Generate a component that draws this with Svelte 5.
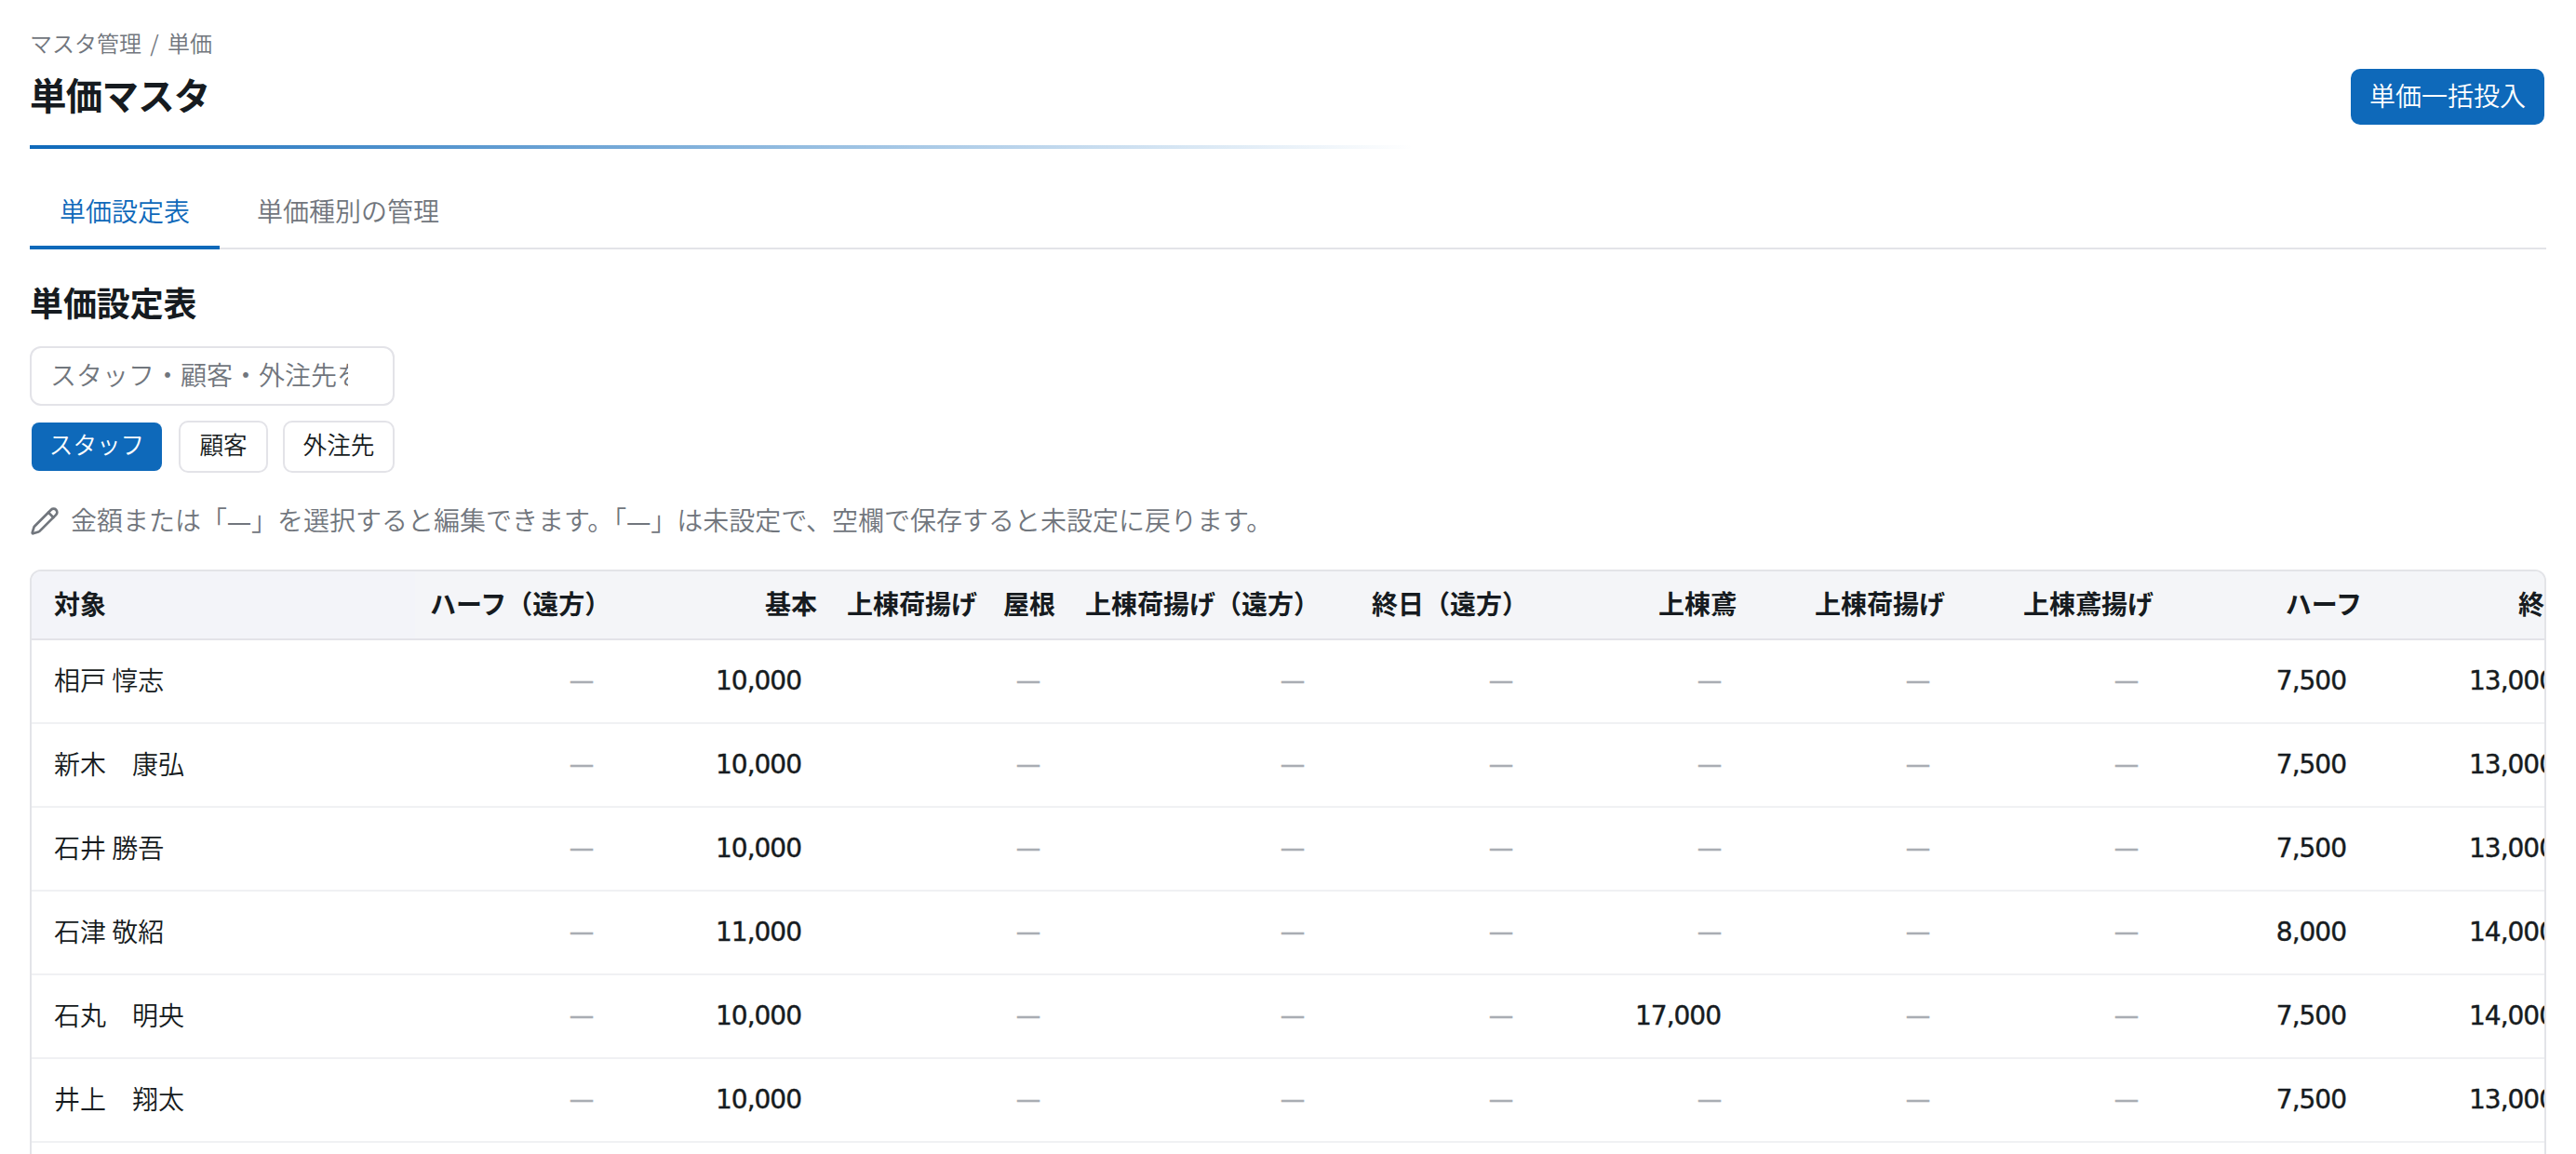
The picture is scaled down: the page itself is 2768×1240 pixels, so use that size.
<script>
  const columns = [
    'ハーフ（遠方）', '基本', '上棟荷揚げ　屋根', '上棟荷揚げ（遠方）', '終日（遠方）',
    '上棟鳶', '上棟荷揚げ', '上棟鳶揚げ', 'ハーフ', '終日',
  ];
  const row = (name, base, half, full, tobi = null) => ({
    name,
    prices: [null, base, null, null, null, tobi, null, null, half, full],
  });
  const rows = [
    row('相戸 惇志', 10000, 7500, 13000),
    row('新木　康弘', 10000, 7500, 13000),
    row('石井 勝吾', 10000, 7500, 13000),
    row('石津 敬紹', 11000, 8000, 14000),
    row('石丸　明央', 10000, 7500, 14000, 17000),
    row('井上　翔太', 10000, 7500, 13000),
  ];
  const format = (n) => String(n).replace(/\B(?=(\d{3})+$)/g, ',');
</script>

<main>
  <header>
    <div>
      <nav class="crumbs">マスタ管理 / 単価</nav>
      <h1>単価マスタ</h1>
    </div>
    <button class="primary bulk">単価一括投入</button>
  </header>
  <div class="rule"></div>

  <div class="tabs">
    <button class="tab active">単価設定表</button>
    <button class="tab">単価種別の管理</button>
  </div>

  <h2>単価設定表</h2>
  <div class="search"><input placeholder="スタッフ・顧客・外注先を検索" /></div>
  <div class="filters">
    <button class="chip primary">スタッフ</button>
    <button class="chip">顧客</button>
    <button class="chip">外注先</button>
  </div>

  <p class="hint">
    <svg viewBox="0 0 24 24" fill="none" stroke="currentColor" stroke-width="2" stroke-linecap="round" stroke-linejoin="round">
      <path d="M21.174 6.812a1 1 0 0 0-3.986-3.987L3.842 16.174a2 2 0 0 0-.5.83l-1.321 4.352a.5.5 0 0 0 .623.622l4.353-1.32a2 2 0 0 0 .83-.497z" />
      <path d="m15 5 4 4" />
    </svg>
    <span>金額または「<i>—</i>」を選択すると編集できます。「<i>—</i>」は未設定で、空欄で保存すると未設定に戻ります。</span>
  </p>

  <div class="table-wrap">
    <table>
      <colgroup>
        <col class="name-col" />
        {#each columns as _, i}
          <col class:w256={i === 2} class:w284={i === 3} />
        {/each}
      </colgroup>
      <thead>
        <tr>
          <th class="name">対象</th>
          {#each columns as c}<th>{c}</th>{/each}
        </tr>
      </thead>
      <tbody>
        {#each rows as r}
          <tr>
            <td class="name">{r.name}</td>
            {#each r.prices as p}
              <td class:empty={p === null}>{p === null ? '—' : format(p)}</td>
            {/each}
          </tr>
        {/each}
      </tbody>
    </table>
  </div>
</main>

<style>
  :global(body) { margin: 0; background: #fff; }
  main {
    box-sizing: border-box;
    height: 1240px;
    overflow: hidden;
    padding: 28px 32px 0;
    color: #161b20;
    font-family: "Noto Sans CJK JP", sans-serif;
    font-size: 28px;
    font-weight: 350;
  }
  button, input { font: inherit; color: inherit; box-sizing: border-box; margin: 0; }
  header { display: flex; justify-content: space-between; align-items: flex-end; height: 108px; }
  header > div { align-self: flex-start; }
  .crumbs { font-size: 24px; line-height: 36px; word-spacing: 4px; color: #71767d; }
  h1 { margin: 12px 0 0; font-size: 39.5px; line-height: 50px; font-weight: 700; letter-spacing: -0.02em; }
  button { padding: 0; border: 2px solid transparent; background: transparent; white-space: nowrap; }
  .primary { background: #0e69ba; background-clip: padding-box; color: #fff; }
  .bulk { width: 212px; height: 64px; border-radius: 12px; padding-bottom: 4px; line-height: 56px; }
  .rule { height: 4px; margin-top: 20px; background: linear-gradient(90deg, #0e69ba, rgba(14, 105, 186, 0) 55%); }
  .tabs { display: flex; gap: 8px; height: 108px; align-items: flex-end; box-shadow: inset 0 -2px #e3e4e8; }
  .tab { height: 82px; padding: 2px 32px 0; border: 0; border-bottom: 4px solid transparent; color: #71767d; line-height: 74px; }
  .tab.active { color: #0e69ba; border-bottom-color: #0e69ba; }
  h2 { margin: 31px 0 0; font-size: 36px; line-height: 50px; font-weight: 700; letter-spacing: -0.1px; }
  .search {
    box-sizing: border-box; width: 392px; height: 64px; margin-top: 23px; padding: 0 48px 0 20px;
    border: 2px solid #e3e3e8; border-radius: 12px;
  }
  input { display: block; width: 100%; height: 60px; padding: 0 0 5px; border: 0; outline: 0; background: none; }
  input::placeholder { color: #71767d; opacity: 1; }
  .filters { display: flex; justify-content: space-between; width: 392px; margin-top: 16px; }
  .chip { height: 56px; width: 120px; border-radius: 10px; border-color: #e3e3e8; padding-bottom: 7px; font-size: 25.6px; line-height: 44px; }
  .chip.primary { width: 144px; border-color: transparent; }
  .chip:nth-child(2) { width: 96px; }
  .hint { display: flex; align-items: center; gap: 12px; margin: 32px 0 0; height: 40px; line-height: 40px; color: #71767d; white-space: nowrap; }
  .hint svg { width: 32px; height: 32px; }
  .hint span { padding-bottom: 5px; }
  .hint i { margin: 0 1px; font: 400 24px/1 Inter, sans-serif; }
  .table-wrap { margin-top: 32px; height: 700px; border: 2px solid #e3e4e8; border-radius: 12px; overflow: hidden; }
  table { width: 2744px; table-layout: fixed; border-collapse: separate; border-spacing: 0; }
  col { width: 224px; }
  .name-col { width: 412px; }
  .w256 { width: 256px; }
  .w284 { width: 284px; }
  th, td { box-sizing: border-box; white-space: nowrap; text-align: right; line-height: 42px; }
  th { height: 74px; padding: 0 16px 5px; background: #f4f5f8; border-bottom: 2px solid #e3e3e8; font-weight: 700; }
  td { height: 90px; padding: 0 33px 0 32px; border-bottom: 2px solid #f0f1f3; font-family: "DejaVu Sans", sans-serif; font-weight: 400; letter-spacing: -1px; -webkit-text-stroke: 0.4px currentColor; }
  th.name, td.name { text-align: left; padding: 0 24px 5px; }
  th.name { background: #f3f4f9; }
  td.name { font-family: inherit; font-weight: 350; letter-spacing: 0; -webkit-text-stroke: 0; }
  td.empty { color: #a9adb3; font: 400 24px/42px Inter, sans-serif; letter-spacing: 0; }
</style>
